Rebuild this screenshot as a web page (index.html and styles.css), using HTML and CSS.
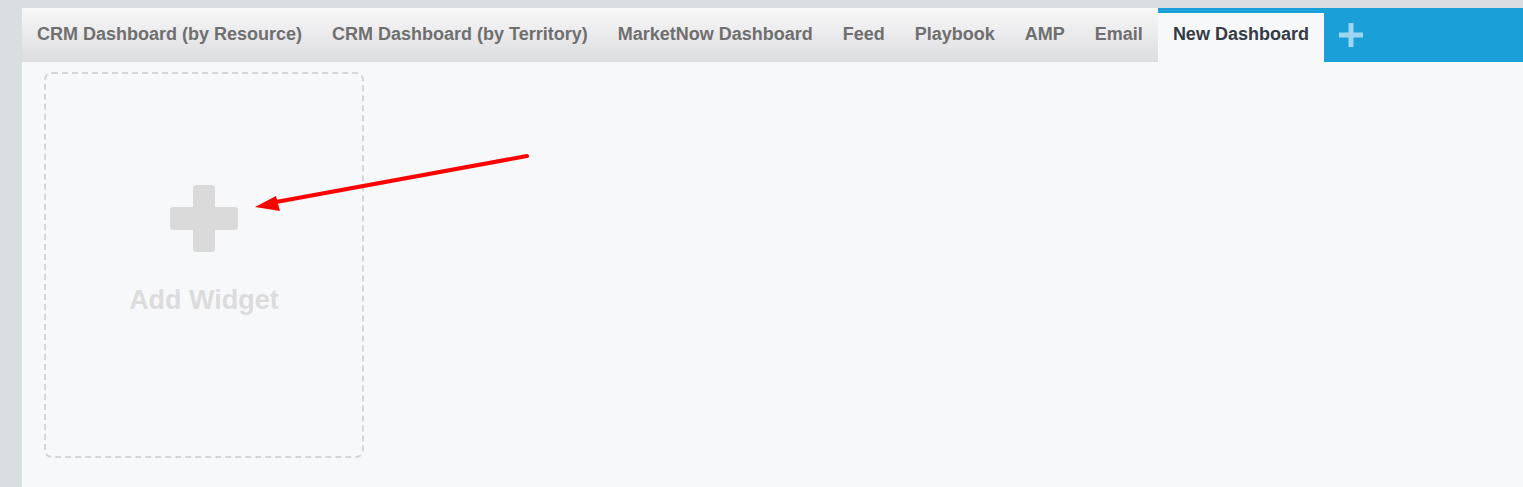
FILE: index.html
```html
<!DOCTYPE html>
<html lang="en">
<head>
  <meta charset="UTF-8" />
  <meta name="viewport" content="width=device-width, initial-scale=1" />
  <title>New Dashboard</title>
  <link rel="stylesheet" href="styles.css">
</head>
<body>
  <div class="page">
    <nav class="tabs">
      <a class="tab" href="#">CRM Dashboard (by Resource)</a>
      <a class="tab" href="#">CRM Dashboard (by Territory)</a>
      <a class="tab" href="#">MarketNow Dashboard</a>
      <a class="tab" href="#">Feed</a>
      <a class="tab" href="#">Playbook</a>
      <a class="tab" href="#">AMP</a>
      <a class="tab" href="#">Email</a>
      <a class="tab active" href="#">New Dashboard</a>
      <div class="tab-add">
        <button class="add-btn" aria-label="Add dashboard">
          <svg width="24" height="24" viewBox="0 0 24 24">
            <rect x="9.5" y="0" width="5" height="24" fill="#9ed6f2"/>
            <rect x="0" y="9.5" width="24" height="5" fill="#9ed6f2"/>
          </svg>
        </button>
      </div>
    </nav>

    <main class="board">
      <div class="widget-slot">
        <div class="big-plus">
          <span class="bar-h"></span>
          <span class="bar-v"></span>
        </div>
        <div class="slot-label">Add Widget</div>
      </div>

      <!-- annotation arrow -->
      <svg class="arrow" width="300" height="70" viewBox="0 0 300 70">
        <line x1="283" y1="14" x2="32" y2="60" stroke="#ff0000" stroke-width="4" stroke-linecap="round"/>
        <polygon points="11,65 32,54 36,69" fill="#ff0000"/>
      </svg>
    </main>
  </div>
</body>
</html>
```

FILE: styles.css
```css
body {
  margin: 0;
  background-color: #d9dee0;
  font-family: 'Liberation Sans', Arial, sans-serif;
}

.page {
  margin: 8px 0 0 22px;
  height: 479px;
  display: flex;
  flex-direction: column;
  background-color: #f7f8fa;
}

.tabs {
  display: flex;
  height: 54px;
  background: linear-gradient(#f8f8f9, #dcdddf);
}

.tab {
  display: flex;
  align-items: center;
  padding: 0 15px 2px;
  text-decoration: none;
  color: #6f6f6f;
  font-weight: 700;
  font-size: 18px;
  white-space: nowrap;
}

.tab.active {
  background-color: #f7f8fa;
  color: #343b45;
  border-top: 5px solid #1a9fd9;
  padding-bottom: 7px;
}

.tab-add {
  flex: 1;
  background-color: #1a9fd9;
  display: flex;
  align-items: center;
}

.add-btn {
  background: none;
  border: none;
  padding: 0;
  margin-left: 15px;
  width: 24px;
  height: 24px;
  cursor: pointer;
}

.add-btn svg {
  display: block;
}

.board {
  flex: 1;
  position: relative;
  padding: 10px 22px;
}

.widget-slot {
  width: 316px;
  height: 382px;
  border: 2px dashed #d6d6d6;
  border-radius: 8px;
  display: flex;
  flex-direction: column;
  align-items: center;
}

.big-plus {
  position: relative;
  width: 68px;
  height: 67px;
  margin-top: 111px;
}

.bar-h,
.bar-v {
  position: absolute;
  background-color: #dadada;
  border-radius: 3px;
}

.bar-h {
  left: 0;
  top: 22px;
  width: 68px;
  height: 23px;
}

.bar-v {
  left: 23px;
  top: 0;
  width: 22px;
  height: 67px;
}

.slot-label {
  margin-top: 33px;
  font-size: 27px;
  font-weight: 700;
  color: #dcdcdc;
}

.arrow {
  position: absolute;
  left: 222px;
  top: 80px;
}
```
